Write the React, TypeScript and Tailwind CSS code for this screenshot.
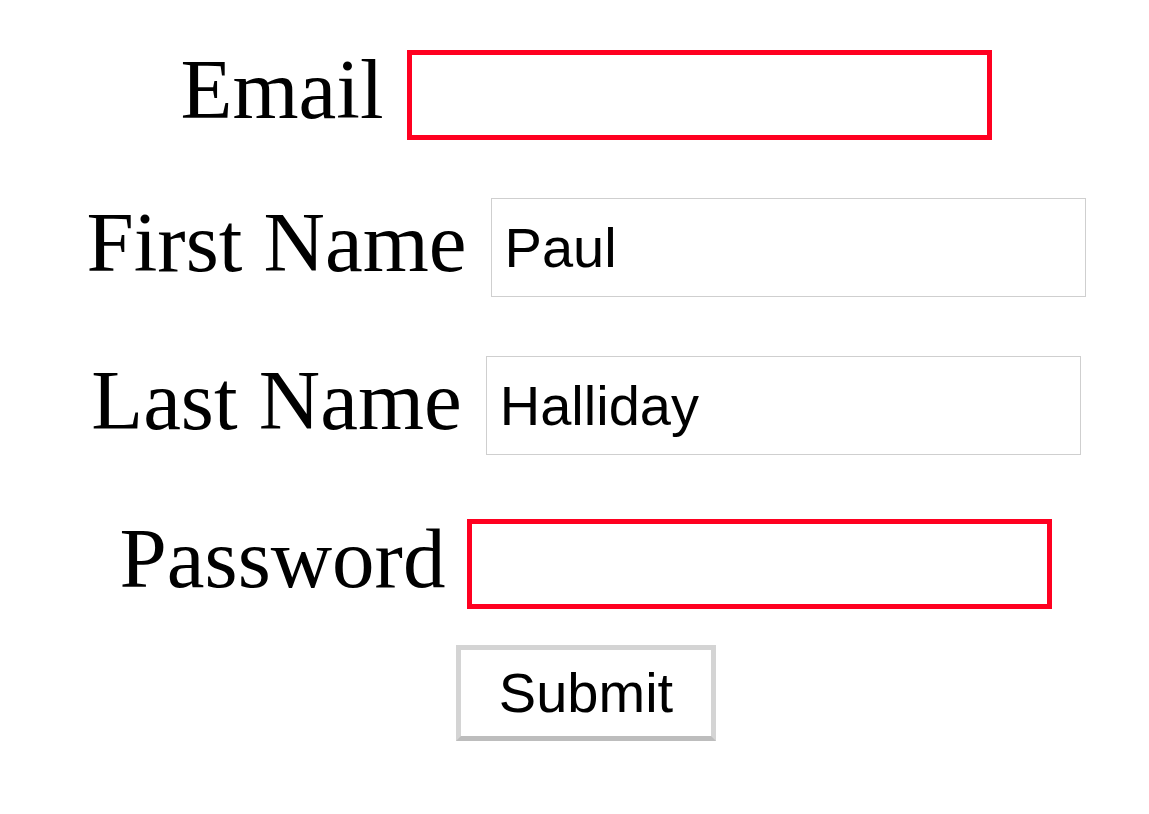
import React from "react";

const serif = { fontFamily: '"Liberation Serif", "Times New Roman", serif' };

export default function App() {
  return (
    <div className="min-h-[814px] w-full bg-white">
      <form
        className="flex flex-col items-center pt-[50px] pl-[23px]"
        onSubmit={(e) => e.preventDefault()}
      >
        <div className="flex h-[90px] items-center gap-[23px]">
          <label className="mb-[12px] text-[85px] leading-[60px] text-black" style={serif}>
            Email
          </label>
          <input
            type="email"
            className="box-border h-[90px] w-[585px] border-[5px] border-[#ff0020] bg-white px-[12px] text-[56px] text-black outline-none font-['Liberation_Sans',Arial,sans-serif]"
          />
        </div>

        <div className="mt-[58px] flex h-[99px] items-center gap-[24px]">
          <label className="mb-[12px] text-[85px] leading-[60px] text-black" style={serif}>
            First Name
          </label>
          <input
            type="text"
            defaultValue="Paul"
            className="box-border h-[99px] w-[595px] border border-[#cfcfcf] bg-white px-[13px] text-[56px] text-black outline-none font-['Liberation_Sans',Arial,sans-serif]"
          />
        </div>

        <div className="mt-[59px] flex h-[99px] items-center gap-[24px]">
          <label className="mb-[12px] text-[85px] leading-[60px] text-black" style={serif}>
            Last Name
          </label>
          <input
            type="text"
            defaultValue="Halliday"
            className="box-border h-[99px] w-[595px] border border-[#cfcfcf] bg-white px-[13px] text-[56px] text-black outline-none font-['Liberation_Sans',Arial,sans-serif]"
          />
        </div>

        <div className="mt-[64px] flex h-[90px] items-center gap-[22px]">
          <label className="mb-[12px] text-[85px] leading-[60px] text-black" style={serif}>
            Password
          </label>
          <input
            type="password"
            className="box-border h-[90px] w-[585px] border-[5px] border-[#ff0020] bg-white px-[12px] text-[56px] text-black outline-none font-['Liberation_Sans',Arial,sans-serif]"
          />
        </div>

        <button
          type="submit"
          className="mt-[36px] box-border flex h-[96px] w-[260px] items-center justify-center border-[5px] border-[#d4d4d4] border-b-[#bdbdbd] bg-white text-[56px] text-black font-['Liberation_Sans',Arial,sans-serif]"
        >
          Submit
        </button>
      </form>
    </div>
  );
}
